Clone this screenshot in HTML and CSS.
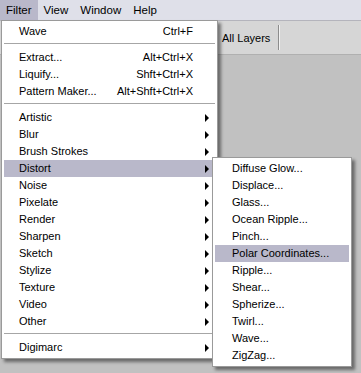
FILE: index.html
```html
<!DOCTYPE html>
<html>
<head>
<meta charset="utf-8">
<link rel="stylesheet" href="styles.css">
</head>
<body>
<div class="app">
  <div class="menubar">
    <span class="mb-item active">Filter</span>
    <span class="mb-item">View</span>
    <span class="mb-item">Window</span>
    <span class="mb-item">Help</span>
  </div>
  <div class="toolbar">
    <span class="tb-label">All Layers</span>
    <span class="tb-sep"></span>
  </div>
  <div class="workspace"></div>

  <div class="menu main">
    <div class="item"><span class="label">Wave</span><span class="key">Ctrl+F</span><span class="arrowcol"></span></div>
    <div class="sep"></div>
    <div class="item"><span class="label">Extract...</span><span class="key">Alt+Ctrl+X</span><span class="arrowcol"></span></div>
    <div class="item"><span class="label">Liquify...</span><span class="key">Shft+Ctrl+X</span><span class="arrowcol"></span></div>
    <div class="item"><span class="label">Pattern Maker...</span><span class="key">Alt+Shft+Ctrl+X</span><span class="arrowcol"></span></div>
    <div class="sep"></div>
    <div class="item"><span class="label">Artistic</span><span class="arrowcol"><i class="arrow"></i></span></div>
    <div class="item"><span class="label">Blur</span><span class="arrowcol"><i class="arrow"></i></span></div>
    <div class="item"><span class="label">Brush Strokes</span><span class="arrowcol"><i class="arrow"></i></span></div>
    <div class="item hl"><span class="label">Distort</span><span class="arrowcol"><i class="arrow"></i></span></div>
    <div class="item"><span class="label">Noise</span><span class="arrowcol"><i class="arrow"></i></span></div>
    <div class="item"><span class="label">Pixelate</span><span class="arrowcol"><i class="arrow"></i></span></div>
    <div class="item"><span class="label">Render</span><span class="arrowcol"><i class="arrow"></i></span></div>
    <div class="item"><span class="label">Sharpen</span><span class="arrowcol"><i class="arrow"></i></span></div>
    <div class="item"><span class="label">Sketch</span><span class="arrowcol"><i class="arrow"></i></span></div>
    <div class="item"><span class="label">Stylize</span><span class="arrowcol"><i class="arrow"></i></span></div>
    <div class="item"><span class="label">Texture</span><span class="arrowcol"><i class="arrow"></i></span></div>
    <div class="item"><span class="label">Video</span><span class="arrowcol"><i class="arrow"></i></span></div>
    <div class="item"><span class="label">Other</span><span class="arrowcol"><i class="arrow"></i></span></div>
    <div class="sep"></div>
    <div class="item"><span class="label">Digimarc</span><span class="arrowcol"><i class="arrow"></i></span></div>
  </div>

  <div class="menu sub">
    <div class="item"><span class="label">Diffuse Glow...</span></div>
    <div class="item"><span class="label">Displace...</span></div>
    <div class="item"><span class="label">Glass...</span></div>
    <div class="item"><span class="label">Ocean Ripple...</span></div>
    <div class="item"><span class="label">Pinch...</span></div>
    <div class="item hl"><span class="label">Polar Coordinates...</span></div>
    <div class="item"><span class="label">Ripple...</span></div>
    <div class="item"><span class="label">Shear...</span></div>
    <div class="item"><span class="label">Spherize...</span></div>
    <div class="item"><span class="label">Twirl...</span></div>
    <div class="item"><span class="label">Wave...</span></div>
    <div class="item"><span class="label">ZigZag...</span></div>
  </div>
</div>
</body>
</html>
```

FILE: styles.css
```css
* { box-sizing: border-box; }
html, body { margin: 0; padding: 0; }
body {
  font-family: "Liberation Sans", Arial, sans-serif;
  font-size: 11px;
  color: #000;
  background: #c1c1c1;
}
.app {
  position: relative;
  width: 361px;
  height: 373px;
  display: flex;
  flex-direction: column;
  background: #c1c1c1;
  overflow: hidden;
}
.menubar {
  height: 21px;
  display: flex;
  align-items: stretch;
  background: #dfe0e9;
  border-bottom: 1px solid #b4b4bc;
}
.mb-item {
  display: flex;
  align-items: center;
  padding: 0 6px 1px 6px;
  height: 20px;
  font-size: 11.5px;
}
.mb-item.active { background: #b9b8ca; }
.toolbar {
  height: 34px;
  display: flex;
  align-items: center;
  padding-left: 222px;
  background: #d6d6d6;
  border-bottom: 1px solid #b0b0b0;
}
.tb-label { font-size: 11px; }
.tb-sep {
  width: 2px;
  height: 25px;
  margin-left: 8px;
  border-left: 1px solid #8c8c8c;
  border-right: 1px solid #f2f2f2;
}
.workspace { flex: 1; background: #c1c1c1; }

.menu {
  position: absolute;
  background: #fff;
  border: 1px solid #9a9a9a;
  padding: 2px;
  box-shadow: 3px 3px 3px rgba(0,0,0,0.45);
}
.menu.main { left: 1px; top: 20px; width: 217px; }
.menu.sub { left: 212px; top: 157px; width: 140px; }
.item {
  height: 17px;
  line-height: 17px;
  display: flex;
  align-items: center;
  padding-left: 15px;
  padding-right: 6px;
  white-space: nowrap;
}
.sub .item { padding-left: 17px; }
.item.hl { background: #b9b8ca; }
.label { flex: 1; }
.key { text-align: right; }
.arrowcol {
  width: 16px;
  display: flex;
  justify-content: flex-end;
  align-items: center;
}
.arrow {
  display: block;
  width: 0;
  height: 0;
  border-top: 4px solid transparent;
  border-bottom: 4px solid transparent;
  border-left: 4px solid #000;
}
.sep {
  height: 9px;
  padding-top: 3px;
}
.sep::before {
  content: "";
  display: block;
  height: 1px;
  background: #a6a6a6;
}
```
